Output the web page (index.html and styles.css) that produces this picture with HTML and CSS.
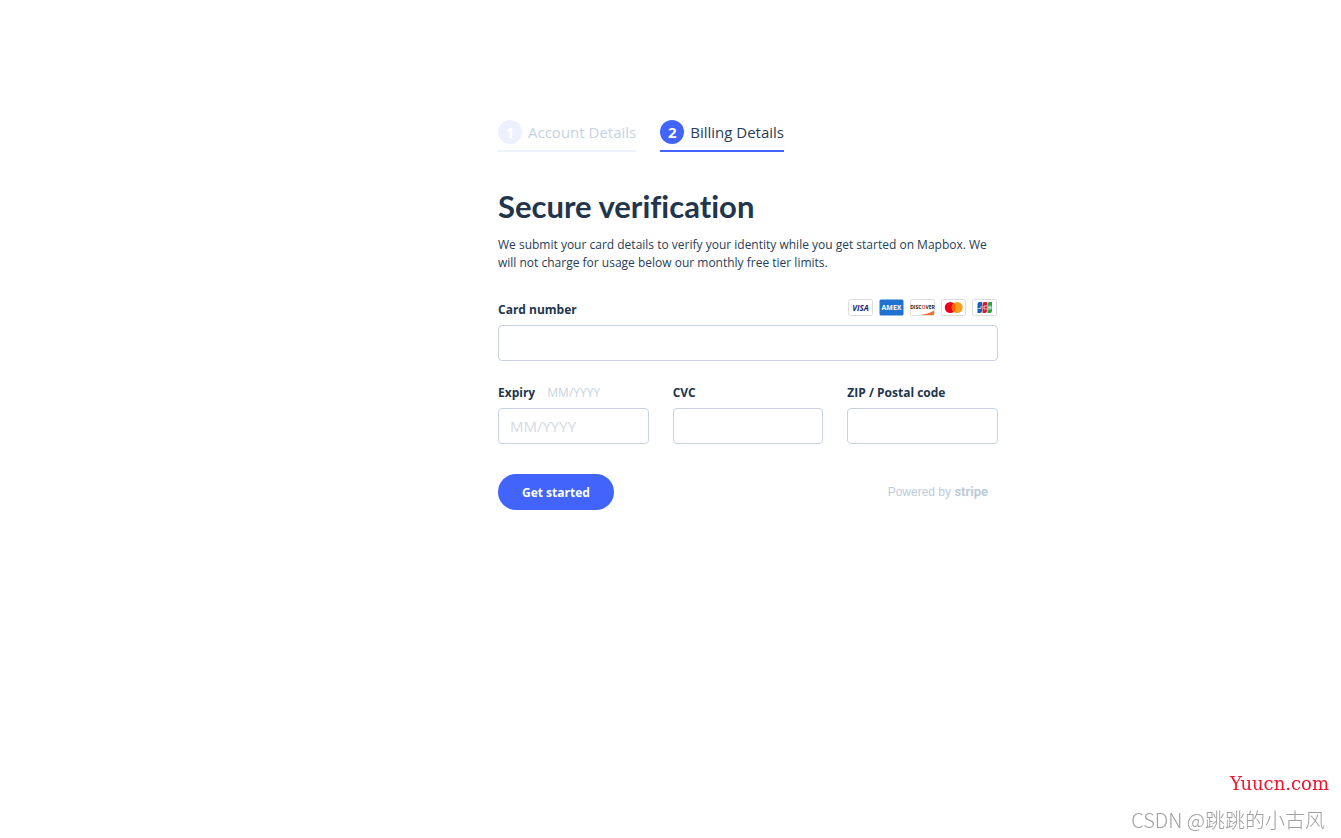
FILE: index.html
```html
<!DOCTYPE html>
<html lang="en">
<head>
    <title>Billing Details</title>

    <meta charset="utf-8"/>
    <meta name="viewport" content="width=device-width, initial-scale=1"/>

    <link rel="stylesheet" href="styles.css">
</head>
<body>
<main class="page">
    <div class="signup">
        <ol class="steps">
            <li class="step"><span class="step-number">1</span>Account Details</li>
            <li class="step active" aria-current="step"><span class="step-number">2</span>Billing Details</li>
        </ol>

        <h1>Secure verification</h1>
        <p class="intro">We submit your card details to verify your identity while you get started on Mapbox. We will not charge for usage below our monthly free tier limits.</p>

        <form>
            <div class="field">
                <div class="label-row with-cards">
                    <label for="card">Card number</label>
                    <div class="cards">
                        <svg class="card" viewBox="0 0 25 17" role="img" aria-label="Visa">
                            <rect class="card-edge" x=".5" y=".5" width="24" height="16" rx="2"/>
                            <text class="visa" x="12.5" y="11.5">VISA</text>
                        </svg>
                        <svg class="card" viewBox="0 0 25 17" role="img" aria-label="American Express">
                            <rect x=".5" y=".5" width="24" height="16" rx="1.5" fill="#1f72cd"/>
                            <text class="amex" x="12.5" y="11">AMEX</text>
                        </svg>
                        <svg class="card" viewBox="0 0 25 17" role="img" aria-label="Discover">
                            <rect class="card-edge" x=".5" y=".5" width="24" height="16" rx="2"/>
                            <path d="M11 16 C16 15 21 13.500 24 11.500 V15 Q24 16 23 16 Z" fill="#fd6a31"/>
                            <text class="discover" x="12.5" y="10">DISC<tspan fill="#f25b22">O</tspan>VER</text>
                        </svg>
                        <svg class="card" viewBox="0 0 25 17" role="img" aria-label="Mastercard">
                            <rect class="card-edge" x=".5" y=".5" width="24" height="16" rx="2"/>
                            <circle cx="9.300" cy="8.500" r="5.500" fill="#eb001b"/>
                            <circle cx="16.200" cy="8.500" r="5.500" fill="#f79e1b"/>
                            <path d="M12.750 4.200 A5.500 5.500 0 0 1 12.750 12.800 A5.500 5.500 0 0 1 12.750 4.200" fill="#ff5f00"/>
                        </svg>
                        <svg class="card" viewBox="0 0 25 17" role="img" aria-label="JCB">
                            <rect class="card-edge" x=".5" y=".5" width="24" height="16" rx="2"/>
                            <path d="M7.500 3 H10 V12 Q10 14 8 14 H5.500 V5 Q5.500 3 7.500 3" fill="#0f62b5"/>
                            <path d="M12.500 3 H15 V12 Q15 14 13 14 H10.500 V5 Q10.500 3 12.500 3" fill="#d9173c"/>
                            <path d="M17.500 3 H20 V12 Q20 14 18 14 H15.500 V5 Q15.500 3 17.500 3" fill="#26a63c"/>
                            <path d="M9 7 V9.500 H6 M15 7 H12 V10 H15 M16 7.200 H19 V10 H16 M16 8.600 H19" fill="none" stroke="#fff" stroke-width=".7"/>
                        </svg>
                    </div>
                </div>
                <input type="text" id="card" inputmode="numeric" autocomplete="cc-number">
            </div>

            <div class="field-row">
                <div class="field">
                    <div class="label-row">
                        <label for="expiry">Expiry <span class="hint">MM/YYYY</span></label>
                    </div>
                    <input type="text" id="expiry" placeholder="MM/YYYY" autocomplete="cc-exp">
                </div>
                <div class="field">
                    <div class="label-row">
                        <label for="cvc">CVC</label>
                    </div>
                    <input type="text" id="cvc" autocomplete="cc-csc">
                </div>
                <div class="field">
                    <div class="label-row">
                        <label for="zip">ZIP / Postal code</label>
                    </div>
                    <input type="text" id="zip" autocomplete="postal-code">
                </div>
            </div>

            <div class="actions">
                <button type="submit">Get started</button>
                <div class="powered">Powered by <span class="stripe">stripe</span></div>
            </div>
        </form>
    </div>
</main>

<div class="marks">
    <div class="site-mark">Yuucn.com</div>
    <div class="author-mark" lang="zh-CN">CSDN @跳跳的小古风</div>
</div>
</body>
</html>
```
FILE: styles.css
```css
* {
    box-sizing: border-box;
}

body {
    margin: 0;
    min-height: 100vh;
    background: #fff;
    color: #273d56;
    font-family: "Open Sans", sans-serif;
    font-size: 12px;
    line-height: 18px;
}

.page {
    padding: 120px 0 60px 155px;
}

.signup {
    max-width: 500px;
    margin: 0 auto;
}

/* steps */

.steps {
    display: flex;
    gap: 24px;
    margin: 0 0 36px;
    padding: 0;
    list-style: none;
}

.step {
    display: flex;
    align-items: center;
    gap: 6px;
    padding-bottom: 6px;
    border-bottom: 2px solid #edf0fd;
    color: #c6d2e1;
    font-size: 15px;
    line-height: 24px;
}

.step-number {
    width: 24px;
    height: 24px;
    border-radius: 50%;
    background: #edf0fd;
    color: #fff;
    font-weight: bold;
    text-align: center;
}

.step.active {
    border-color: #4264fb;
    color: #273d56;
}

.active .step-number {
    background: #4264fb;
}

/* heading */

h1 {
    margin: 0 0 12px;
    color: #21364d;
    font-family: Lato, sans-serif;
    font-size: 31px;
    font-variant-ligatures: none;
    line-height: 36px;
}

.intro {
    margin: 0 0 27px;
}

/* form */

.field {
    flex: 1;
    min-width: 0;
}

.field-row {
    display: flex;
    gap: 24px;
    margin: 23px 0 30px;
}

.label-row {
    display: flex;
    justify-content: space-between;
    margin-bottom: 6px;
}

.with-cards {
    height: 20px;
}

label {
    align-self: flex-end;
    color: #21364d;
    font-weight: bold;
}

.hint {
    margin-left: 9px;
    color: #c6d2e1;
    font-weight: normal;
}

input {
    display: block;
    width: 100%;
    height: 36px;
    padding: 0 11px;
    border: 1px solid #c6d2e1;
    border-radius: 4px;
    background: #fff;
    color: #273d56;
    font: 15px "Open Sans", sans-serif;
}

input::placeholder {
    color: #d3dae4;
}

.cards {
    display: flex;
    gap: 6px;
    padding-right: 1px;
}

.card {
    width: 25px;
    height: 17px;
    font-family: "Open Sans", sans-serif;
    font-weight: bold;
    text-anchor: middle;
}

.card-edge {
    fill: #fff;
    stroke: #dcdcdc;
}

.visa {
    fill: #1a2a7a;
    font-size: 8px;
    font-style: italic;
}

.amex {
    fill: #fff;
    font-size: 7px;
}

.discover {
    fill: #222;
    font-size: 5px;
}

.actions {
    display: flex;
    justify-content: space-between;
    align-items: center;
}

button {
    height: 36px;
    padding: 0 24px;
    border: 0;
    border-radius: 18px;
    background: #4264fb;
    color: #fff;
    font: bold 12px "Open Sans", sans-serif;
    cursor: pointer;
}

button:hover {
    background: #314ccd;
}

.powered {
    padding-right: 10px;
    color: #bccbdb;
    font-family: "Liberation Sans", sans-serif;
}

.stripe {
    font-family: Roboto, sans-serif;
    font-size: 13px;
    font-weight: bold;
}

/* watermarks over the bottom corner */

.marks {
    position: fixed;
    right: 12px;
    bottom: 6px;
    text-align: right;
    pointer-events: none;
}

.site-mark {
    margin-bottom: 12px;
    color: #f5122d;
    font-family: "DejaVu Serif", serif;
    font-size: 18px;
    line-height: 24px;
}

.author-mark {
    padding-right: 4px;
    color: #a0a0a0;
    font-family: "Noto Sans CJK SC", sans-serif;
    font-size: 20px;
    font-weight: 300;
    line-height: 24px;
}
```
